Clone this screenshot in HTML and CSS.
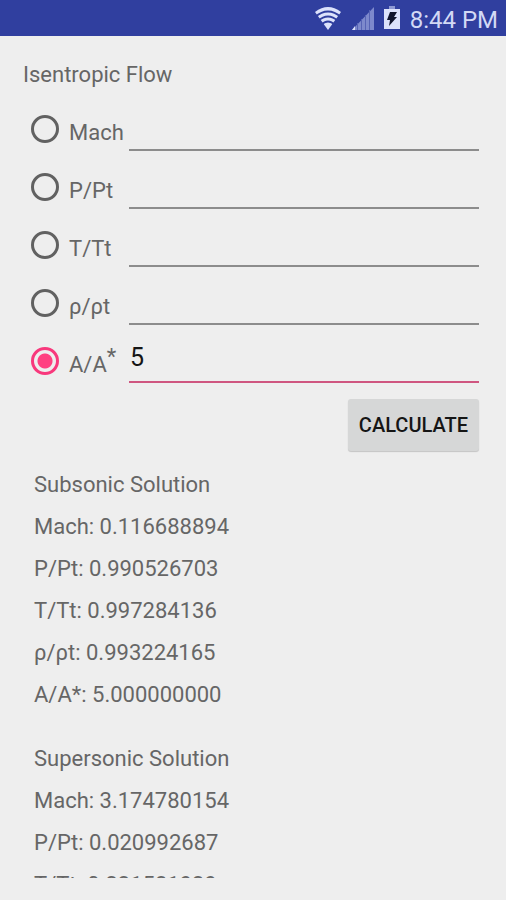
FILE: index.html
```html
<!DOCTYPE html>
<html lang="en">
<head>
<meta charset="utf-8">
<meta name="viewport" content="width=device-width, initial-scale=1">
<title>Isentropic Flow</title>
<link rel="stylesheet" href="styles.css">
</head>
<body>
<header class="status">
  <svg class="wifi" width="28" height="24" viewBox="0 0 28 24" aria-hidden="true">
    <path class="wifi-fill" d="M1 6Q14-4 27 6L14 24Z"/>
    <path class="wifi-gap" d="M1 11Q14 0 27 11M4 15Q14 6 24 15M7 19Q14 12 21 19"/>
  </svg>
  <svg class="signal" width="22" height="24" viewBox="0 0 22 24" aria-hidden="true">
    <path class="wedge" d="M0 24L22 1V24Z"/>
    <path class="bars" d="M5.500 24V17M9.500 24V13M13.500 24V9M17.500 24V4"/>
    <path class="bar-on" d="M0 24L3 20V24Z"/>
  </svg>
  <svg class="battery" width="16" height="24" viewBox="0 0 16 24" aria-hidden="true">
    <path class="cell-cap" d="M5 0h6v3H5z"/>
    <path class="cell" d="M0 3h16v20H0z"/>
    <path class="bolt" d="M6 6h7l-3 5h3L5 20l1-6H3z"/>
  </svg>
  <time class="clock">8:44 PM</time>
</header>
<main class="page">
  <h1 class="title">Isentropic Flow</h1>
  <form class="form">
    <div class="row">
      <input class="radio" type="radio" name="known" id="k-mach">
      <label class="name" for="k-mach">Mach</label>
      <input class="field" type="text" inputmode="decimal" aria-label="Mach">
    </div>
    <div class="row">
      <input class="radio" type="radio" name="known" id="k-p">
      <label class="name" for="k-p">P/Pt</label>
      <input class="field" type="text" inputmode="decimal" aria-label="P/Pt">
    </div>
    <div class="row">
      <input class="radio" type="radio" name="known" id="k-t">
      <label class="name" for="k-t">T/Tt</label>
      <input class="field" type="text" inputmode="decimal" aria-label="T/Tt">
    </div>
    <div class="row">
      <input class="radio" type="radio" name="known" id="k-rho">
      <label class="name" for="k-rho">ρ/ρt</label>
      <input class="field" type="text" inputmode="decimal" aria-label="ρ/ρt">
    </div>
    <div class="row">
      <input class="radio" type="radio" name="known" id="k-a" checked>
      <label class="name" for="k-a">A/A<sup>*</sup></label>
      <input class="field active" type="text" inputmode="decimal" aria-label="A/A*" value="5">
    </div>
    <button class="calculate" type="button">CALCULATE</button>
  </form>
  <div class="results">
    <section class="solution">
      <h2>Subsonic Solution</h2>
      <p>Mach: 0.116688894</p>
      <p>P/Pt: 0.990526703</p>
      <p>T/Tt: 0.997284136</p>
      <p>ρ/ρt: 0.993224165</p>
      <p>A/A*: 5.000000000</p>
    </section>
    <section class="solution">
      <h2>Supersonic Solution</h2>
      <p>Mach: 3.174780154</p>
      <p>P/Pt: 0.020992687</p>
      <p>T/Tt: 0.331581939</p>
    </section>
  </div>
</main>
</body>
</html>
```
FILE: styles.css
```css
* { box-sizing: border-box; }

body {
  margin: 0;
  height: 100vh;
  display: flex;
  flex-direction: column;
  background: #eeeeee;
  color: #666666;
  font: 22px/28px Roboto, sans-serif;
}

.status {
  flex: none;
  display: flex;
  align-items: center;
  justify-content: flex-end;
  height: 36px;
  padding: 0 8px;
  background: #303f9f;
  color: #d3d9f5;
}

.wifi { margin-right: 10px; }
.wifi-fill { fill: #dce2fb; }
.wifi-gap { fill: none; stroke: #303f9f; stroke-width: 2; }
.signal { margin-right: 10px; }
.wedge { fill: #7d89cc; }
.bars { stroke: #5663b5; stroke-width: 1; }
.bar-on { fill: #dce2fb; }
.battery { margin-right: 10px; }
.cell { fill: #dce2fb; }
.cell-cap { fill: #8f9ad4; }
.bolt { fill: #10142c; }
.clock {
  padding-top: 3px;
  font-size: 24px;
}

.page {
  flex: 1;
  min-height: 0;
  display: flex;
  flex-direction: column;
  padding: 25px 27px 22px 23px;
}

.title {
  margin: 0 0 6px;
  font-size: 22px;
  font-weight: 400;
}

.form {
  flex: none;
  display: flex;
  flex-direction: column;
}

.row {
  display: flex;
  align-items: flex-start;
  height: 58px;
  padding-left: 8px;
}

.radio {
  appearance: none;
  flex: none;
  width: 28px;
  height: 28px;
  margin: 20px 10px 0 0;
  border: 3px solid #616161;
  border-radius: 50%;
}

.radio:checked {
  border-color: #f8387c;
  background: radial-gradient(circle, #ff4081 7px, transparent 8px);
}

.name {
  flex: none;
  width: 60px;
  margin-top: 24px;
}

.name sup {
  font-size: 22px;
  line-height: 0;
  vertical-align: 8px;
}

.field {
  flex: 1;
  min-width: 0;
  height: 56px;
  padding: 6px 1px 0;
  border: 0;
  border-bottom: 2px solid #8c8c8c;
  border-radius: 0;
  outline: 0;
  background: transparent;
  color: #151515;
  font: 25px/28px Roboto, sans-serif;
}

.field.active { border-bottom-color: #cf5680; }

.calculate {
  align-self: flex-end;
  height: 52px;
  margin-top: 14px;
  padding: 0 11px;
  border: 0;
  border-radius: 3px;
  background: #d6d7d7;
  box-shadow: 0 1px 1px #c4c4c4;
  color: #151515;
  font: 500 20px/28px Roboto, sans-serif;
}

.results {
  flex: 1;
  min-height: 0;
  overflow: hidden;
  margin-top: 13px;
  padding-left: 11px;
}

.solution { margin-bottom: 22px; }

.solution h2,
.solution p {
  margin: 0;
  font-size: 22px;
  font-weight: 400;
  line-height: 42px;
}
```
